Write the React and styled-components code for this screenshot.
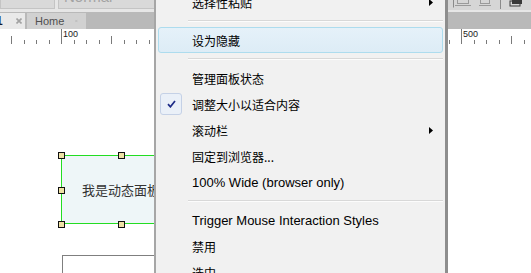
import React from 'react'
import styled, { createGlobalStyle } from 'styled-components'

const GlobalStyle = createGlobalStyle`
  html, body {
    margin: 0;
    padding: 0;
  }
  body {
    width: 531px;
    height: 273px;
    overflow: hidden;
    background: #fff;
    font-family: "Liberation Sans", "Noto Sans CJK SC", sans-serif;
  }
`

const Screen = styled.div`
  position: relative;
  width: 531px;
  height: 273px;
  overflow: hidden;
  display: flex;
  flex-direction: column;
`

const Toolbar = styled.div`
  height: 12px;
  flex: none;
  background: #e6e6e6;
  display: flex;
  align-items: flex-start;
  overflow: hidden;
`

const Field = styled.div`
  width: ${p => p.$width}px;
  height: 9px;
  margin-left: ${p => p.$gap || 0}px;
  background: #d9d9d9;
  border: 1px solid #c4c4c4;
  border-top: none;
  box-sizing: border-box;
  overflow: hidden;
  color: #a3a3a3;
  font-size: 15px;
  line-height: 15px;
  padding-left: 5px;
`

const FieldText = styled.div`
  margin-top: -11px;
`

const ToolGroup = styled.div`
  margin-left: auto;
  width: 83px;
  height: 10px;
  background: #d6d6d6;
  display: flex;
  align-items: flex-start;
  gap: 6px;
  padding-left: 5px;
  box-sizing: border-box;
`

const TabBar = styled.div`
  height: 17px;
  flex: none;
  background: #b9b9b9;
  display: flex;
  align-items: flex-end;
  gap: 2px;
`

const Tab = styled.div`
  height: 16px;
  width: ${p => p.$width}px;
  margin-left: ${p => p.$offset || 0}px;
  box-sizing: border-box;
  background: ${p => (p.$active ? '#e9e9e9' : '#d1d1d1')};
  display: flex;
  align-items: center;
  padding: 0 ${p => p.$pad || 0}px;
  gap: ${p => p.$space}px;
  font-size: ${p => (p.$active ? 12 : 11)}px;
  font-weight: ${p => (p.$active ? 700 : 400)};
  color: ${p => (p.$active ? '#14182a' : '#4f4f4f')};
`

const RulerBar = styled.div`
  height: 15px;
  flex: none;
  background: #fff;
`

const Canvas = styled.div`
  position: relative;
  flex: 1;
  background: #fff;
`

const Panel = styled.div`
  position: absolute;
  left: 61px;
  top: 111px;
  width: 120px;
  height: 69px;
  box-sizing: border-box;
  border: 1px solid #22dd22;
  background: #eef6f8;
  display: flex;
  align-items: center;
  justify-content: center;
  font-family: "Noto Sans CJK SC", sans-serif;
  font-size: 13px;
  color: #333;
`

const Handle = styled.div`
  position: absolute;
  width: 7px;
  height: 7px;
  box-sizing: border-box;
  border: 1px solid #111;
  background: #efe2a6;
  left: ${p => p.$x - 3.5}px;
  top: ${p => p.$y - 3.5}px;
`

const Frame = styled.div`
  position: absolute;
  left: 62px;
  top: 211px;
  width: 220px;
  height: 90px;
  border: 1px solid #7f7f7f;
`

const Menu = styled.div`
  position: absolute;
  left: 154px;
  top: -11px;
  width: 294px;
  height: 300px;
  box-sizing: border-box;
  background: #f1f1f1;
  border-left: 2px solid #a6a6a6;
  border-right: 3px solid #8e8e8e;
  padding: 0 2px;
  display: flex;
  flex-direction: column;
`

const Item = styled.div`
  height: 26px;
  flex: none;
  box-sizing: border-box;
  display: flex;
  align-items: center;
  padding-left: 1px;
  border: 1px solid ${p => (p.$hover ? '#addcee' : 'transparent')};
  border-radius: 3px;
  background: ${p => (p.$hover ? 'linear-gradient(#e5f1f9, #ddecf6)' : 'transparent')};
  color: #000;
`

const IconSlot = styled.div`
  width: 22px;
  height: 22px;
  margin-right: 10px;
  box-sizing: border-box;
  display: flex;
  align-items: center;
  justify-content: center;
  border-radius: 3px;
  border: 1px solid ${p => (p.$checked ? '#c5d1e6' : 'transparent')};
  background: ${p => (p.$checked ? '#eaf0f8' : 'transparent')};
`

const Label = styled.span`
  font-size: ${p => (p.$latin ? 13 : 12)}px;
  font-family: ${p => (p.$latin ? '"Liberation Sans", "Noto Sans CJK SC", sans-serif' : '"Noto Sans CJK SC", sans-serif')};
  white-space: nowrap;
`

const Arrow = styled.svg`
  margin-left: auto;
  margin-right: 9px;
`

const Separator = styled.div`
  height: 12px;
  flex: none;
  padding-top: 5px;
  padding-left: 30px;
  box-sizing: border-box;
  &::after {
    content: '';
    display: block;
    height: 1px;
    background: #d8d8d8;
    border-bottom: 1px solid #fcfcfc;
  }
`

function Close({ color }) {
  return (
    <svg width="6" height="6" viewBox="0 0 6 6">
      <path d="M0.5 0.5 L5.5 5.5 M5.5 0.5 L0.5 5.5" stroke={color} strokeWidth="1.6" />
    </svg>
  )
}

function Ruler() {
  const ticks = []
  for (let k = -5; k <= 38; k++) {
    const x = Math.round(61 + k * 12.5) + 0.5
    let top = 11
    if (k % 8 === 0) top = 0
    else if (k % 4 === 0) top = 7
    ticks.push(<line key={k} x1={x} x2={x} y1={top} y2={15} stroke="#7a7a7a" />)
    if (k % 8 === 0) {
      ticks.push(
        <text key={'t' + k} x={x + 1.5} y={8} fontSize="9" fill="#1c1c1c" fontFamily="Liberation Sans, sans-serif">
          {100 + k * 12.5}
        </text>
      )
    }
  }
  return (
    <svg width="531" height="15" shapeRendering="crispEdges">
      {ticks}
    </svg>
  )
}

const items = [
  { label: '选择性粘贴', sub: true },
  'sep',
  { label: '设为隐藏', hover: true },
  'sep',
  { label: '管理面板状态' },
  { label: '调整大小以适合内容', checked: true },
  { label: '滚动栏', sub: true },
  { label: '固定到浏览器...' },
  { label: '100% Wide (browser only)', latin: true },
  'sep',
  { label: 'Trigger Mouse Interaction Styles', latin: true },
  { label: '禁用' },
  { label: '选中' },
]

export default function App() {
  return (
    <Screen>
      <GlobalStyle />
      <Toolbar>
        <Field $width={55} />
        <Field $width={110} $gap={3}>
          <FieldText>Normal</FieldText>
        </Field>
        <ToolGroup>
          <svg width="20" height="8" viewBox="0 0 20 8">
            <path d="M0.5 0 V7.5" stroke="#8a8a8a" />
            <rect x="4.5" y="-2.5" width="11" height="6" fill="none" stroke="#9a9a9a" />
            <path d="M2 5.5 H18" stroke="#9a9a9a" />
          </svg>
          <svg width="14" height="8" viewBox="0 0 14 8">
            <rect x="1.5" y="-2.5" width="9" height="6" fill="none" stroke="#9a9a9a" />
            <path d="M0 5.5 H12" stroke="#9a9a9a" />
          </svg>
          <svg width="4" height="9" viewBox="0 0 4 9">
            <path d="M1.5 0 V9" stroke="#8a8a8a" />
          </svg>
          <svg width="14" height="8" viewBox="0 0 14 8">
            <rect x="3" y="-3" width="10" height="7" fill="#3a3a3a" />
            <rect x="1" y="1" width="10" height="5" fill="none" stroke="#3a3a3a" />
          </svg>
        </ToolGroup>
      </Toolbar>
      <TabBar>
        <Tab $active $width={29} $offset={-4} $pad={0} $space={13}>
          <span>1</span>
          <Close color="#a2a2a2" />
        </Tab>
        <Tab $width={59} $pad={8} $space={11}>
          <span>Home</span>
          <Close color="#b5b5b5" />
        </Tab>
      </TabBar>
      <RulerBar>
        <Ruler />
      </RulerBar>
      <Canvas>
        <Panel>
          我是动态面板
          <Handle $x={-1} $y={-1} />
          <Handle $x={59} $y={-1} />
          <Handle $x={119} $y={-1} />
          <Handle $x={-1} $y={34} />
          <Handle $x={-1} $y={68} />
          <Handle $x={59} $y={68} />
        </Panel>
        <Frame />
      </Canvas>
      <Menu>
        {items.map((it, i) =>
          it === 'sep' ? (
            <Separator key={i} />
          ) : (
            <Item key={i} $hover={it.hover}>
              <IconSlot $checked={it.checked}>
                {it.checked && (
                  <svg width="9" height="8" viewBox="0 0 9 8">
                    <path d="M1 4.2 L3.4 6.8 L8 1" fill="none" stroke="#1d2b87" strokeWidth="1.7" />
                  </svg>
                )}
              </IconSlot>
              <Label $latin={it.latin}>{it.label}</Label>
              {it.sub && (
                <Arrow width="4" height="7" viewBox="0 0 4 7">
                  <path d="M0 0 L4 3.5 L0 7 Z" fill="#000" />
                </Arrow>
              )}
            </Item>
          )
        )}
      </Menu>
    </Screen>
  )
}
